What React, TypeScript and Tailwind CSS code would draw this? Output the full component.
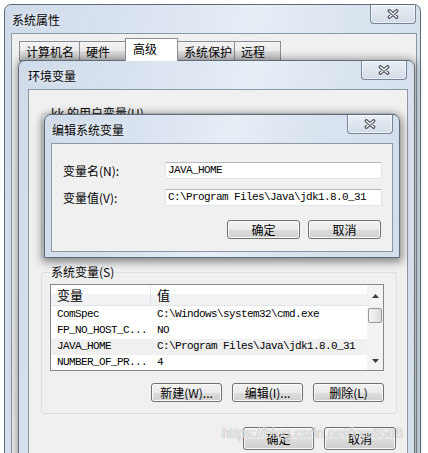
import React from "react";

const mono =
  "font-['Liberation_Mono','Noto_Sans_CJK_SC',monospace] text-[11px] tracking-[-0.6px]";

const sysVars = [
  ["ComSpec", "C:\\Windows\\system32\\cmd.exe"],
  ["FP_NO_HOST_C...", "NO"],
  ["JAVA_HOME", "C:\\Program Files\\Java\\jdk1.8.0_31"],
  ["NUMBER_OF_PR...", "4"],
];

function CloseButton() {
  return (
    <div className="flex h-[19px] w-[46px] items-center justify-center rounded-b-[4px] border border-t-0 border-[#74849a] bg-linear-to-b from-[#eaeff6] to-[#d3dce8] shadow-[inset_0_0_0_1px_rgba(255,255,255,0.55)]">
      <svg width="12" height="10" viewBox="0 0 12 10">
        <path d="M2.5 2 L9.5 8 M9.5 2 L2.5 8" stroke="#3b4149" strokeWidth="3.6" strokeLinecap="round" fill="none" />
        <path d="M2.5 2 L9.5 8 M9.5 2 L2.5 8" stroke="#ffffff" strokeWidth="1.6" strokeLinecap="round" fill="none" />
      </svg>
    </div>
  );
}

function Win({
  title,
  className,
  titleClass,
  bodyClass,
  children,
}: {
  title: string;
  className: string;
  titleClass: string;
  bodyClass: string;
  children?: React.ReactNode;
}) {
  return (
    <div
      className={`absolute flex flex-col rounded-t-[7px] border border-[#5f6b78] bg-[linear-gradient(100deg,#cfdbea_0%,#dde6f1_35%,#e7eef6_50%,#dae4ef_70%,#d3deeb_100%)] ${className}`}
    >
      <div className={`flex h-[28px] shrink-0 items-start justify-between ${titleClass}`}>
        <span className="mt-[7px] leading-[16px] text-[12px] [text-shadow:0_0_6px_#ffffff]">{title}</span>
        <CloseButton />
      </div>
      <div className={`border border-[#8e98a4] bg-[#f0f0f0] ${bodyClass}`}>{children}</div>
    </div>
  );
}

function Btn({ children, className }: { children: React.ReactNode; className: string }) {
  return (
    <button
      type="button"
      className={`flex items-center justify-center rounded-[3px] border border-[#707070] bg-[linear-gradient(#f2f2f2_0%,#ebebeb_50%,#dddddd_51%,#cfcfcf_100%)] text-[12px] leading-[16px] shadow-[inset_0_0_0_1px_#fbfbfb] ${className}`}
    >
      {children}
    </button>
  );
}

function Tab({ label, w, selected }: { label: string; w: string; selected?: boolean }) {
  return (
    <div
      className={`-ml-px flex items-start border border-[#898c95] pl-[6px] pt-[2px] leading-[16px] ${w} ${
        selected
          ? "relative z-10 h-[23px] border-b-0 bg-white pl-[7px]"
          : "h-[20px] bg-[linear-gradient(#f3f3f3_0%,#ebebeb_50%,#dddddd_51%,#cfcfcf_100%)]"
      }`}
    >
      {label}
    </div>
  );
}

function TextBox({ value }: { value: string }) {
  return (
    <div
      className={`flex h-[17px] flex-1 items-center border border-[#dfe4ea] border-t-[#b5b9c0] bg-white pl-[2px] ${mono}`}
    >
      {value}
    </div>
  );
}

export default function App() {
  return (
    <div className="relative h-[453px] w-[428px] overflow-hidden bg-white font-['Noto_Sans_CJK_SC',sans-serif] text-[12px] text-black">
      {/* 系统属性 */}
      <Win
        title="系统属性"
        className="left-[4px] top-[4px] h-[480px] w-[417px]"
        titleClass="pl-[7px] pr-[4px]"
        bodyClass="ml-[6px] mr-[3px] flex flex-1 flex-col pl-[8px] pt-[4px]"
      >
        <div className="flex items-end">
          <Tab label="计算机名" w="w-[61px]" />
          <Tab label="硬件" w="w-[47px]" />
          <Tab label="高级" w="w-[53px]" selected />
          <Tab label="系统保护" w="w-[58px]" />
          <Tab label="远程" w="w-[47px]" />
        </div>
        <div className="-mt-px mr-[8px] flex-1 border border-[#898c95] bg-white" />
      </Win>

      {/* 环境变量 */}
      <Win
        title="环境变量"
        className="left-[18px] top-[60px] h-[430px] w-[397px] shadow-[0_0_8px_1px_rgba(0,0,0,0.4)]"
        titleClass="pl-[9px] pr-[7px]"
        bodyClass="ml-[9px] mr-[6px] flex flex-1 flex-col"
      >
        <fieldset className="ml-[12px] mr-[10px] mt-[15px] rounded-[3px] border border-[#d5dfe5] px-[8px]">
          <legend className="px-[1px] leading-[16px]">kk 的用户变量(U)</legend>
          <div className="h-[136px]" />
        </fieldset>

        <fieldset className="ml-[12px] mr-[10px] mt-[6px] rounded-[3px] border border-[#d5dfe5] pb-[11px] pl-[8px] pr-[12px]">
          <legend className="px-[1px] leading-[16px]">系统变量(S)</legend>
          <div className="mt-[4px] flex h-[87px] overflow-hidden border border-[#828790] bg-white">
            <div className="flex flex-1 flex-col">
              <div className="flex h-[24px] items-center border-b border-[#e5e5e5] bg-[linear-gradient(#ffffff_0%,#ffffff_45%,#f1f2f4_46%,#f1f2f4_100%)]">
                <div className="flex h-full w-[100px] items-center border-r border-[#dfe3e8] pl-[6px] text-[13px]">变量</div>
                <div className="pl-[6px] text-[13px]">值</div>
              </div>
              <div className="mt-[1px] flex flex-col">
                {sysVars.map(([name, value]) => (
                  <div
                    key={name}
                    className={`flex h-[16px] items-center ${mono} ${name === "JAVA_HOME" ? "bg-[#f0f0f0]" : ""}`}
                  >
                    <div className="w-[100px] pl-[6px]">{name}</div>
                    <div className="pl-[6px]">{value}</div>
                  </div>
                ))}
              </div>
            </div>
            <div className="flex w-[16px] flex-col items-center bg-[#f3f3f3]">
              <div className="flex h-[21px] items-center">
                <svg width="7" height="4" viewBox="0 0 7 4">
                  <polygon points="0,4 7,4 3.5,0" fill="#3c3c3c" />
                </svg>
              </div>
              <div className="mt-[2px] h-[15px] w-[14px] rounded-[2px] border border-[#979797] bg-linear-to-r from-[#f5f5f5] to-[#dcdcdc]" />
              <div className="flex-1" />
              <div className="flex h-[18px] items-center">
                <svg width="7" height="4" viewBox="0 0 7 4">
                  <polygon points="0,0 7,0 3.5,4" fill="#3c3c3c" />
                </svg>
              </div>
            </div>
          </div>
          <div className="mt-[12px] flex justify-end gap-[10px]">
            <Btn className="h-[19px] w-[71px]">新建(W)...</Btn>
            <Btn className="h-[19px] w-[71px]">编辑(I)...</Btn>
            <Btn className="h-[19px] w-[71px]">删除(L)</Btn>
          </div>
        </fieldset>

        <div className="mr-[11px] mt-[13px] flex justify-end gap-[10px]">
          <Btn className="h-[23px] w-[71px]">确定</Btn>
          <Btn className="h-[23px] w-[72px]">取消</Btn>
        </div>
      </Win>

      {/* 编辑系统变量 */}
      <Win
        title="编辑系统变量"
        className="left-[44px] top-[114px] h-[144px] w-[356px] shadow-[0_2px_9px_2px_rgba(0,0,0,0.45)]"
        titleClass="pl-[7px] pr-[6px]"
        bodyClass="mx-[6px] mb-[5px] flex flex-1 flex-col pl-[11px] pr-[10px] pt-[18px]"
      >
        <div className="flex items-center">
          <div className="w-[102px] leading-[16px]">变量名(N):</div>
          <TextBox value="JAVA_HOME" />
        </div>
        <div className="mt-[10px] flex items-center">
          <div className="w-[102px] leading-[16px]">变量值(V):</div>
          <TextBox value="C:\Program Files\Java\jdk1.8.0_31" />
        </div>
        <div className="mr-[1px] mt-[14px] flex justify-end gap-[8px]">
          <Btn className="h-[19px] w-[73px]">确定</Btn>
          <Btn className="h-[19px] w-[73px]">取消</Btn>
        </div>
      </Win>

      {/* watermark */}
      <div className="absolute left-[222px] top-[424px] font-['Liberation_Sans',sans-serif] text-[14px] leading-[18px] text-white/80 [text-shadow:0_0_1px_rgba(0,0,0,0.45)]">
        https://blog.csdn.net/kxc6588
      </div>
    </div>
  );
}
